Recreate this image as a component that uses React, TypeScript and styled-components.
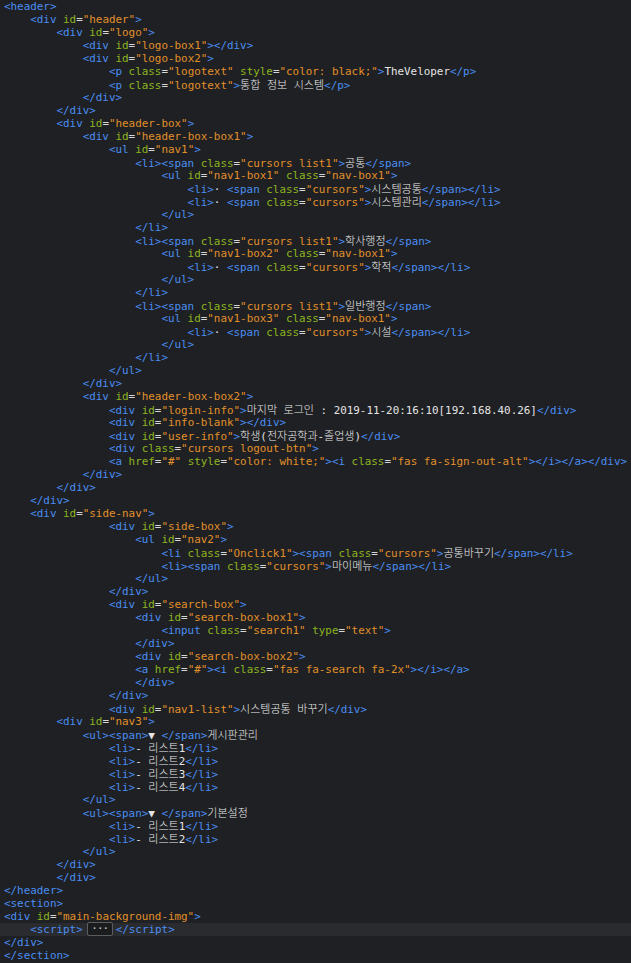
import { Fragment } from 'react'
import styled, { createGlobalStyle } from 'styled-components'

const Global = createGlobalStyle`
	html, body {
		margin: 0;
		padding: 0;
		background: #1f2023;
	}
`

const Editor = styled.pre`
	margin: 0;
	padding: 0 0 0 4px;
	width: 631px;
	height: 963px;
	box-sizing: border-box;
	overflow: hidden;
	background: #1f2023;
	color: #e4e4e4;
	font-family: "DejaVu Sans Mono", "Liberation Mono", monospace;
	font-size: 10.9px;
	line-height: 13px;
`

const Line = styled.div<{ $active?: boolean }>`
	height: 13px;
	white-space: pre;
	margin-left: -4px;
	padding-left: 4px;
	background: ${props => props.$active ? '#2a2b2f' : 'transparent'};
`

const Tag = styled.span`
	color: #4a8ef2;
`
const Attr = styled.span`
	color: #8db51f;
`
const Eq = styled.span`
	color: #d8d8d8;
`
const Value = styled.span`
	color: #e2902a;
`
const Ko = styled.span`
	font-family: "Noto Sans CJK KR", sans-serif;
	font-size: 11px;
	font-weight: 300;
	line-height: 13px;
	color: #ececec;
`

const Fold = styled.span`
	display: inline-block;
	box-sizing: border-box;
	width: 26px;
	height: 14px;
	margin: -1px 3px 0 4px;
	vertical-align: top;
	border: 1px solid #5c5d60;
	border-radius: 2px;
	background: #1b1c1e;
	color: #cfcfcf;
	text-align: center;
	line-height: 11px;
	letter-spacing: -1px;
`

const lines: [number, string][] = [
	[0, '<header>'],
	[1, '<div id="header">'],
	[2, '<div id="logo">'],
	[3, '<div id="logo-box1"></div>'],
	[3, '<div id="logo-box2">'],
	[4, '<p class="logotext" style="color: black;">TheVeloper</p>'],
	[4, '<p class="logotext">통합 정보 시스템</p>'],
	[3, '</div>'],
	[2, '</div>'],
	[2, '<div id="header-box">'],
	[3, '<div id="header-box-box1">'],
	[4, '<ul id="nav1">'],
	[5, '<li><span class="cursors list1">공통</span>'],
	[6, '<ul id="nav1-box1" class="nav-box1">'],
	[7, '<li>· <span class="cursors">시스템공통</span></li>'],
	[7, '<li>· <span class="cursors">시스템관리</span></li>'],
	[6, '</ul>'],
	[5, '</li>'],
	[5, '<li><span class="cursors list1">학사행정</span>'],
	[6, '<ul id="nav1-box2" class="nav-box1">'],
	[7, '<li>· <span class="cursors">학적</span></li>'],
	[6, '</ul>'],
	[5, '</li>'],
	[5, '<li><span class="cursors list1">일반행정</span>'],
	[6, '<ul id="nav1-box3" class="nav-box1">'],
	[7, '<li>· <span class="cursors">시설</span></li>'],
	[6, '</ul>'],
	[5, '</li>'],
	[4, '</ul>'],
	[3, '</div>'],
	[3, '<div id="header-box-box2">'],
	[4, '<div id="login-info">마지막 로그인 : 2019-11-20:16:10[192.168.40.26]</div>'],
	[4, '<div id="info-blank"></div>'],
	[4, '<div id="user-info">학생(전자공학과-졸업생)</div>'],
	[4, '<div class="cursors logout-btn">'],
	[4, '<a href="#" style="color: white;"><i class="fas fa-sign-out-alt"></i></a></div>'],
	[3, '</div>'],
	[2, '</div>'],
	[1, '</div>'],
	[1, '<div id="side-nav">'],
	[4, '<div id="side-box">'],
	[5, '<ul id="nav2">'],
	[6, '<li class="Onclick1"><span class="cursors">공통바꾸기</span></li>'],
	[6, '<li><span class="cursors">마이메뉴</span></li>'],
	[5, '</ul>'],
	[4, '</div>'],
	[4, '<div id="search-box">'],
	[5, '<div id="search-box-box1">'],
	[6, '<input class="search1" type="text">'],
	[5, '</div>'],
	[5, '<div id="search-box-box2">'],
	[5, '<a href="#"><i class="fas fa-search fa-2x"></i></a>'],
	[5, '</div>'],
	[4, '</div>'],
	[4, '<div id="nav1-list">시스템공통 바꾸기</div>'],
	[2, '<div id="nav3">'],
	[3, '<ul><span>▼ </span>게시판관리'],
	[4, '<li>- 리스트1</li>'],
	[4, '<li>- 리스트2</li>'],
	[4, '<li>- 리스트3</li>'],
	[4, '<li>- 리스트4</li>'],
	[3, '</ul>'],
	[3, '<ul><span>▼ </span>기본설정'],
	[4, '<li>- 리스트1</li>'],
	[4, '<li>- 리스트2</li>'],
	[3, '</ul>'],
	[2, '</div>'],
	[2, '</div>'],
	[0, '</header>'],
	[0, '<section>'],
	[0, '<div id="main-background-img">'],
	[1, '<script>{fold}</script>'],
	[0, '</div>'],
	[0, '</section>'],
]

// korean runs get the CJK font, the rest stays monospace
const renderText = (text: string, key: string) =>
	text.split(/([\uAC00-\uD7A3]+)/).map((part, i) =>
		/[\uAC00-\uD7A3]/.test(part)
			? <Ko key={key + i}>{part}</Ko>
			: <Fragment key={key + i}>{part}</Fragment>
	)

const renderTag = (tag: string, key: string) => {
	const head = tag.match(/^<\/?[\w-]+/)![0]
	const body = tag.slice(head.length, -1)
	const parts = [<Tag key={key + 'h'}>{head}</Tag>]
	const re = /(\s+)([\w-]+)(=)("[^"]*")/g
	let m: RegExpExecArray | null
	let i = 0
	while ((m = re.exec(body))) {
		parts.push(
			<Fragment key={key + 'a' + i++}>
				{m[1]}<Attr>{m[2]}</Attr><Eq>{m[3]}</Eq><Value>{m[4]}</Value>
			</Fragment>
		)
	}
	parts.push(<Tag key={key + 'e'}>&gt;</Tag>)
	return parts
}

const renderLine = (src: string) => {
	const out: React.ReactNode[] = []
	const re = /<[^>]*>|\{fold\}/g
	let last = 0
	let m: RegExpExecArray | null
	while ((m = re.exec(src))) {
		if (m.index > last) out.push(...renderText(src.slice(last, m.index), 't' + last))
		if (m[0] === '{fold}') out.push(<Fold key={'f' + m.index}>···</Fold>)
		else out.push(...renderTag(m[0], 'g' + m.index))
		last = m.index + m[0].length
	}
	if (last < src.length) out.push(...renderText(src.slice(last), 't' + last))
	return out
}

const App = () => {
	return (
		<Fragment>
			<Global />
			<Editor>
				{lines.map(([level, src], i) => (
					<Line key={i} $active={src.includes('{fold}')}>
						{' '.repeat(level * 4)}
						{renderLine(src)}
					</Line>
				))}
			</Editor>
		</Fragment>
	)
}

export default App
